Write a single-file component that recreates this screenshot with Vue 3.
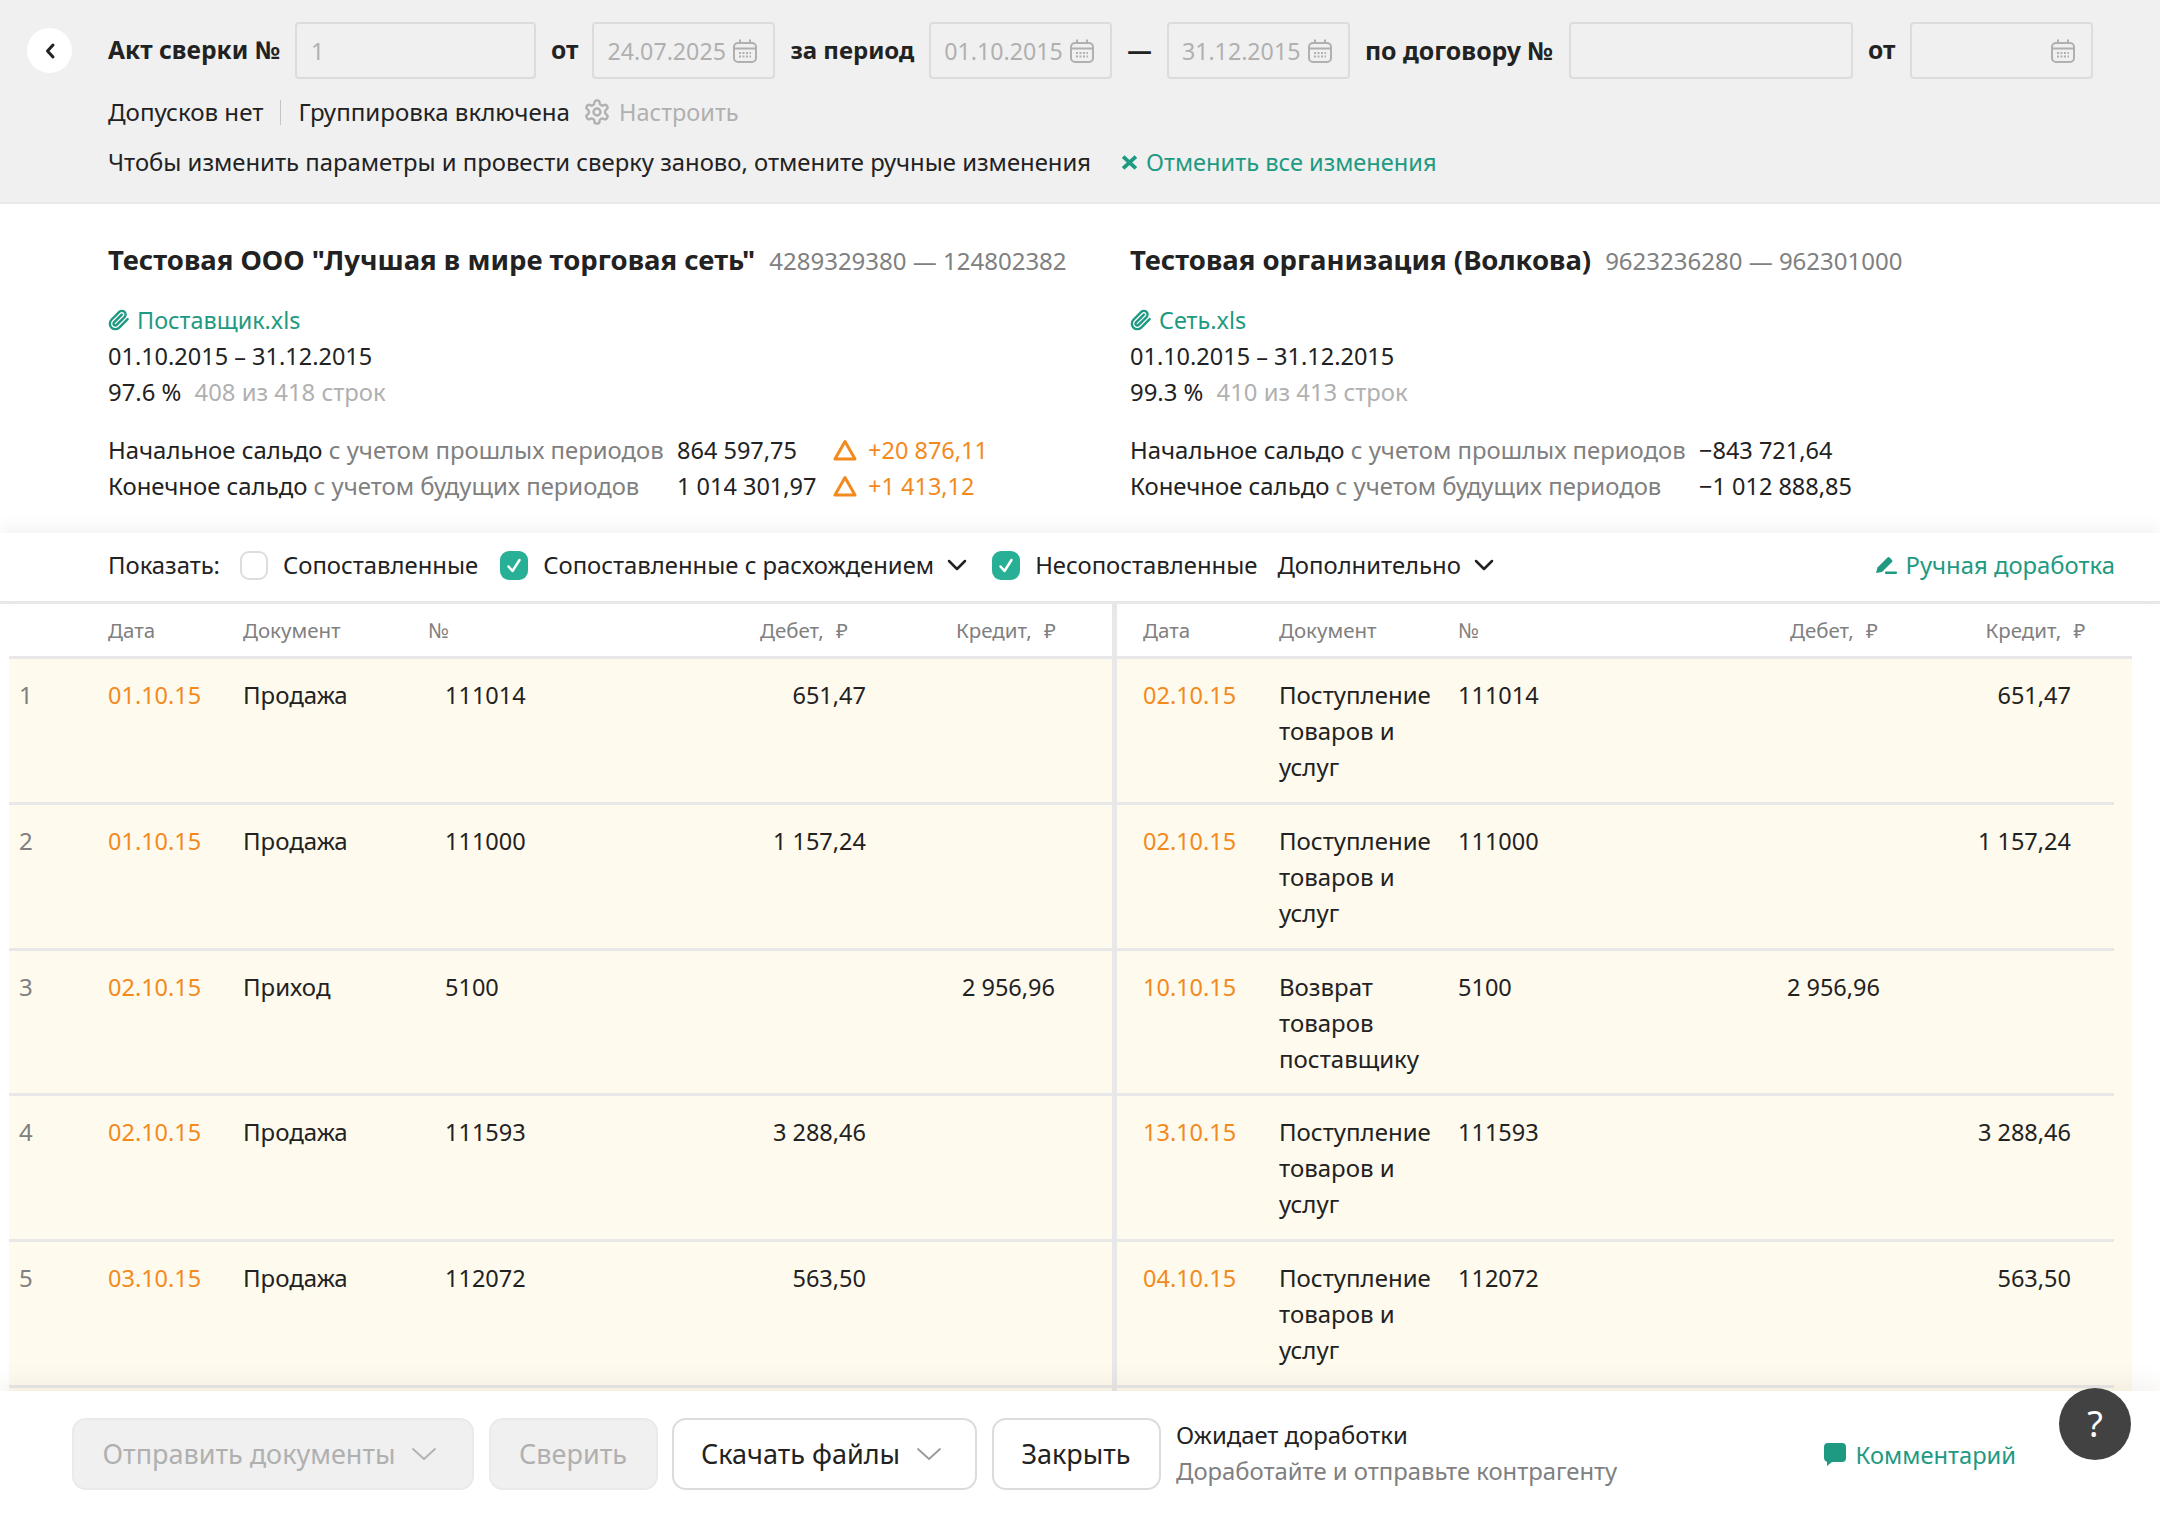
<template>
  <div class="page">
    <header class="top">
      <div class="top-row">
        <button class="back">
          <svg viewBox="0 0 12 18" fill="none" stroke="currentColor" stroke-width="3" stroke-linecap="round" stroke-linejoin="round">
            <path d="M9 3L3.500 9L9 15"/>
          </svg>
        </button>
        <b class="back-gap">Акт сверки №</b>
        <div class="field w-num"><span>1</span></div>
        <b class="tight">от</b>
        <div class="field w-date">
          <span>24.07.2025</span>
          <svg class="cal" viewBox="0 0 24 24" fill="none" stroke="currentColor" stroke-width="2">
            <rect x="1" y="4" width="22" height="19" rx="4"/><path d="M1 9.500h22M7 0.500v4M17 0.500v4"/>
            <path stroke-dasharray="2 1.500" d="M6 14h12M6 17.500h12"/>
          </svg>
        </div>
        <b class="period">за период</b>
        <div class="field w-date">
          <span>01.10.2015</span>
          <svg class="cal" viewBox="0 0 24 24" fill="none" stroke="currentColor" stroke-width="2">
            <rect x="1" y="4" width="22" height="19" rx="4"/><path d="M1 9.500h22M7 0.500v4M17 0.500v4"/>
            <path stroke-dasharray="2 1.500" d="M6 14h12M6 17.500h12"/>
          </svg>
        </div>
        <b>—</b>
        <div class="field w-date">
          <span>31.12.2015</span>
          <svg class="cal" viewBox="0 0 24 24" fill="none" stroke="currentColor" stroke-width="2">
            <rect x="1" y="4" width="22" height="19" rx="4"/><path d="M1 9.500h22M7 0.500v4M17 0.500v4"/>
            <path stroke-dasharray="2 1.500" d="M6 14h12M6 17.500h12"/>
          </svg>
        </div>
        <b class="contract">по договору №</b>
        <div class="field w-contract"></div>
        <b>от</b>
        <div class="field w-date">
          <span></span>
          <svg class="cal" viewBox="0 0 24 24" fill="none" stroke="currentColor" stroke-width="2">
            <rect x="1" y="4" width="22" height="19" rx="4"/><path d="M1 9.500h22M7 0.500v4M17 0.500v4"/>
            <path stroke-dasharray="2 1.500" d="M6 14h12M6 17.500h12"/>
          </svg>
        </div>
      </div>
      <div class="params">
        <span>Допусков нет</span>
        <i class="sep"></i>
        <span>Группировка включена</span>
        <svg class="gear" viewBox="0 0 24 24" fill="none" stroke="currentColor" stroke-width="2">
          <path d="M12.220 2h-.44a2 2 0 0 0-2 2v.18a2 2 0 0 1-1 1.730l-.43.25a2 2 0 0 1-2 0l-.15-.08a2 2 0 0 0-2.730.73l-.22.38a2 2 0 0 0 .73 2.730l.15.1a2 2 0 0 1 1 1.720v.51a2 2 0 0 1-1 1.740l-.15.09a2 2 0 0 0-.73 2.730l.22.38a2 2 0 0 0 2.730.73l.15-.08a2 2 0 0 1 2 0l.43.25a2 2 0 0 1 1 1.730V20a2 2 0 0 0 2 2h.44a2 2 0 0 0 2-2v-.18a2 2 0 0 1 1-1.730l.43-.25a2 2 0 0 1 2 0l.15.08a2 2 0 0 0 2.730-.73l.22-.39a2 2 0 0 0-.73-2.730l-.15-.08a2 2 0 0 1-1-1.740v-.5a2 2 0 0 1 1-1.740l.15-.09a2 2 0 0 0 .73-2.730l-.22-.38a2 2 0 0 0-2.730-.73l-.15.08a2 2 0 0 1-2 0l-.43-.25a2 2 0 0 1-1-1.730V4a2 2 0 0 0-2-2z"/>
          <circle cx="12" cy="12" r="3"/>
        </svg>
        <span class="muted setup">Настроить</span>
      </div>
      <div class="notice">
        <span>Чтобы изменить параметры и провести сверку заново, отмените ручные изменения</span>
        <a class="link cancel">
          <svg viewBox="0 0 16 16" fill="none" stroke="currentColor" stroke-width="3.600">
            <path d="M2 2.500l12 11M14 2.500l-12 11"/>
          </svg>
          Отменить все изменения
        </a>
      </div>
    </header>

    <section class="parties">
      <div v-for="p in parties" :key="p.inn" class="party">
        <div class="party-title"><b>{{ p.name }}</b><span>{{ p.inn }}</span></div>
        <a class="link file">
          <svg viewBox="0 0 24 24" fill="none" stroke="currentColor" stroke-width="2.600" stroke-linecap="round" stroke-linejoin="round">
            <path d="M21.440 11.050l-9.190 9.190a6 6 0 0 1-8.490-8.490l8.570-8.570A4 4 0 1 1 18 8.840l-8.590 8.570a2 2 0 0 1-2.830-2.830l8.490-8.480"/>
          </svg>
          {{ p.file }}
        </a>
        <div class="digits">01.10.2015 – 31.12.2015</div>
        <div>{{ p.percent }} <span class="muted percent-note">{{ p.lines }}</span></div>
        <div class="balances">
          <div v-for="b in p.balances" :key="b.label" class="balance">
            <span class="balance-label">{{ b.label }} <span class="gray">{{ b.note }}</span></span>
            <span class="balance-value digits">{{ b.value }}</span>
            <span v-if="b.delta" class="delta digits">
              <svg viewBox="0 0 24 22" fill="none" stroke="currentColor" stroke-width="3" stroke-linejoin="round">
                <path d="M12 2.500L2 20h20z"/>
              </svg>
              {{ b.delta }}
            </span>
          </div>
        </div>
      </div>
    </section>

    <section class="filters">
      <span class="show-label">Показать:</span>
      <label class="check"><i class="box"></i>Сопоставленные</label>
      <label class="check check-diff">
        <i class="box on">
          <svg viewBox="0 0 28 28" fill="none" stroke="#fff" stroke-width="2.500" stroke-linecap="round" stroke-linejoin="round"><path d="M8.500 15l4 4.500l7-11"/></svg>
        </i>
        Сопоставленные с расхождением
        <svg class="chev" viewBox="0 0 20 12" fill="none" stroke="currentColor" stroke-width="2.500" stroke-linecap="round" stroke-linejoin="round"><path d="M2 2l8 8l8-8"/></svg>
      </label>
      <label class="check check-last">
        <i class="box on">
          <svg viewBox="0 0 28 28" fill="none" stroke="#fff" stroke-width="2.500" stroke-linecap="round" stroke-linejoin="round"><path d="M8.500 15l4 4.500l7-11"/></svg>
        </i>
        Несопоставленные
      </label>
      <span class="extra">
        Дополнительно
        <svg class="chev" viewBox="0 0 20 12" fill="none" stroke="currentColor" stroke-width="2.500" stroke-linecap="round" stroke-linejoin="round"><path d="M2 2l8 8l8-8"/></svg>
      </span>
      <a class="link manual">
        <svg viewBox="0 0 21 18" fill="currentColor">
          <path d="M0 17l1.500-5.500L11.500 1.500a1.500 1.500 0 0 1 2.100 0l2.400 2.400a1.500 1.500 0 0 1 0 2.100L6 16z"/>
          <rect x="9" y="15.500" width="12" height="2.500" rx="1"/>
        </svg>
        Ручная доработка
      </a>
    </section>

    <section class="tables">
      <div class="pane pane-left">
        <div class="thead">
          <span>Дата</span><span>Документ</span><span>№</span>
          <span class="num">Дебет, <i class="rub">₽</i></span>
          <span class="num">Кредит, <i class="rub">₽</i></span>
        </div>
        <div class="tbody">
          <div v-for="r in rows" :key="r.n" class="row">
            <span class="gray">{{ r.n }}</span>
            <span class="date digits">{{ r.left.date }}</span>
            <span>{{ r.left.doc }}</span>
            <span class="no digits">{{ r.no }}</span>
            <span class="num digits">{{ r.left.debit }}</span>
            <span class="num digits">{{ r.left.credit }}</span>
          </div>
        </div>
      </div>
      <div class="pane pane-right">
        <div class="thead">
          <span>Дата</span><span>Документ</span><span>№</span>
          <span class="num">Дебет, <i class="rub">₽</i></span>
          <span class="num">Кредит, <i class="rub">₽</i></span>
        </div>
        <div class="tbody">
          <div v-for="r in rows" :key="r.n" class="row">
            <span class="date digits">{{ r.right.date }}</span>
            <span>{{ r.right.doc }}</span>
            <span class="digits">{{ r.no }}</span>
            <span class="num digits">{{ r.right.debit }}</span>
            <span class="num digits">{{ r.right.credit }}</span>
          </div>
        </div>
      </div>
    </section>

    <footer class="bottom">
      <button class="btn disabled btn-send">
        Отправить документы
        <svg viewBox="0 0 26 14" fill="none" stroke="currentColor" stroke-width="1.800" stroke-linecap="round" stroke-linejoin="round"><path d="M2 2l11 10L24 2"/></svg>
      </button>
      <button class="btn disabled btn-check">Сверить</button>
      <button class="btn btn-files">
        Скачать файлы
        <svg viewBox="0 0 26 14" fill="none" stroke="#999" stroke-width="1.800" stroke-linecap="round" stroke-linejoin="round"><path d="M2 2l11 10L24 2"/></svg>
      </button>
      <button class="btn btn-close">Закрыть</button>
      <div class="status">
        <div>Ожидает доработки</div>
        <div class="gray">Доработайте и отправьте контрагенту</div>
      </div>
      <a class="link comment">
        <svg viewBox="0 0 22 24" fill="currentColor">
          <path d="M4 0h14a4 4 0 0 1 4 4v11a4 4 0 0 1-4 4H8l-5 4v-4.300A4 4 0 0 1 0 15V4a4 4 0 0 1 4-4z"/>
        </svg>
        Комментарий
      </a>
    </footer>

    <div class="help">?</div>
  </div>
</template>

<script setup>
const parties = [
  {
    name: 'Тестовая ООО "Лучшая в мире торговая сеть"',
    inn: '4289329380 — 124802382',
    file: 'Поставщик.xls',
    percent: '97.6 %',
    lines: '408 из 418 строк',
    balances: [
      { label: 'Начальное сальдо', note: 'с учетом прошлых периодов', value: '864 597,75', delta: '+20 876,11' },
      { label: 'Конечное сальдо', note: 'с учетом будущих периодов', value: '1 014 301,97', delta: '+1 413,12' }
    ]
  },
  {
    name: 'Тестовая организация (Волкова)',
    inn: '9623236280 — 962301000',
    file: 'Сеть.xls',
    percent: '99.3 %',
    lines: '410 из 413 строк',
    balances: [
      { label: 'Начальное сальдо', note: 'с учетом прошлых периодов', value: '−843 721,64' },
      { label: 'Конечное сальдо', note: 'с учетом будущих периодов', value: '−1 012 888,85' }
    ]
  }
]

const incoming = 'Поступление товаров и услуг'

const rows = [
  {
    n: 1, no: '111014',
    left: { date: '01.10.15', doc: 'Продажа', debit: '651,47' },
    right: { date: '02.10.15', doc: incoming, credit: '651,47' }
  },
  {
    n: 2, no: '111000',
    left: { date: '01.10.15', doc: 'Продажа', debit: '1 157,24' },
    right: { date: '02.10.15', doc: incoming, credit: '1 157,24' }
  },
  {
    n: 3, no: '5100',
    left: { date: '02.10.15', doc: 'Приход', credit: '2 956,96' },
    right: { date: '10.10.15', doc: 'Возврат товаров поставщику', debit: '2 956,96' }
  },
  {
    n: 4, no: '111593',
    left: { date: '02.10.15', doc: 'Продажа', debit: '3 288,46' },
    right: { date: '13.10.15', doc: incoming, credit: '3 288,46' }
  },
  {
    n: 5, no: '112072',
    left: { date: '03.10.15', doc: 'Продажа', debit: '563,50' },
    right: { date: '04.10.15', doc: incoming, credit: '563,50' }
  }
]
</script>

<style>
html, body {
  margin: 0;
  background: #fff;
  overflow: hidden;
}
</style>

<style scoped>
.page {
  position: relative;
  display: flex;
  flex-direction: column;
  height: 1516px;
  overflow: hidden;
  font-family: "Noto Sans", "Open Sans", sans-serif;
  font-size: 23.850px;
  line-height: 36px;
  color: #222;
}

.link {
  color: #1f9a82;
  display: inline-flex;
  align-items: center;
}

.muted {
  color: #b0b0b0;
}

.gray {
  color: #808080;
}

.digits {
  font-size: 23.500px;
}

.top {
  flex-shrink: 0;
  box-sizing: border-box;
  height: 204px;
  padding: 22px 0 0 27px;
  background: #f0f0f0;
  border-bottom: 2px solid #e8e8e8;
}

.top-row {
  display: flex;
  align-items: center;
  gap: 15px;
  height: 57px;
}

.top-row b {
  font-size: 24.600px;
  font-weight: 700;
  position: relative;
  top: -1px;
}

.top-row .tight {
  margin-right: -1px;
}

.top-row .period {
  font-size: 24px;
}

.top-row .contract {
  margin-right: 1px;
  font-size: 24.900px;
}

.back {
  width: 45px;
  height: 45px;
  padding: 0;
  border: none;
  border-radius: 50%;
  background: #fff;
  color: #222;
  display: flex;
  align-items: center;
  justify-content: center;
}

.back svg {
  width: 12px;
  height: 18px;
}

.back-gap {
  margin-left: 21px;
}

.field {
  box-sizing: border-box;
  height: 57px;
  flex-shrink: 0;
  padding: 0 16px 0 13px;
  display: flex;
  align-items: center;
  justify-content: space-between;
  border: 2px solid #dcdcdc;
  border-radius: 4px;
  font-size: 23.200px;
  color: #b0b0b0;
}

.w-num {
  width: 241px;
  padding-left: 14px;
}

.w-date {
  width: 183px;
}

.w-contract {
  width: 284px;
}

.cal {
  width: 24px;
  height: 24px;
  flex-shrink: 0;
}

.params {
  display: flex;
  align-items: center;
  margin: 15px 0 0 81px;
  font-size: 24.100px;
}

.sep {
  width: 1px;
  height: 25px;
  margin: 0 17px 0 17px;
  background: #c4c4c4;
}

.gear {
  width: 28px;
  height: 28px;
  margin: 0 8px 0 13px;
  color: #b0b0b0;
}

.setup {
  font-size: 23.500px;
}

.notice {
  display: flex;
  align-items: center;
  margin: 14px 0 0 81px;
}

.cancel {
  margin-left: 30px;
  font-size: 23.600px;
}

.cancel svg {
  width: 17px;
  height: 17px;
  margin-right: 8px;
}

.parties {
  flex-shrink: 0;
  box-sizing: border-box;
  height: 329px;
  display: flex;
  padding: 38px 0 0 108px;
}

.party {
  width: 1022px;
}

.party-title {
  display: flex;
  align-items: baseline;
  gap: 14px;
  margin-bottom: 23px;
  font-size: 24px;
  color: #808080;
}

.party-title b {
  font-size: 27.500px;
  color: #222;
}

.file {
  display: flex;
  font-size: 23.400px;
}

.file svg {
  width: 22px;
  height: 22px;
  margin-right: 7px;
}

.percent-note {
  margin-left: 7px;
}

.balances {
  margin-top: 22px;
}

.balance {
  display: flex;
  align-items: center;
  font-size: 23.900px;
}

.balance-label {
  width: 569px;
  flex-shrink: 0;
}

.balance-value {
  width: 156px;
  flex-shrink: 0;
  white-space: nowrap;
}

.delta {
  display: flex;
  align-items: center;
  color: #f28a1e;
  white-space: nowrap;
}

.delta svg {
  width: 24px;
  height: 22px;
  margin-right: 11px;
}

.filters {
  position: relative;
  flex-shrink: 0;
  box-sizing: border-box;
  height: 71px;
  display: flex;
  align-items: center;
  padding: 0 45px 4px 108px;
  background: #fff;
  border-bottom: 3px solid #e8e8e8;
  box-shadow: 0 -6px 16px rgba(0, 0, 0, 0.05);
}

.show-label {
  margin-right: 20px;
}

.check {
  display: flex;
  align-items: center;
  margin-right: 22px;
}

.check-diff {
  margin-right: 25px;
}

.check-last {
  margin-right: 20px;
}

.box {
  box-sizing: border-box;
  width: 28px;
  height: 29px;
  margin-right: 15px;
  flex-shrink: 0;
  border: 2px solid #ddd;
  border-radius: 9px;
  background: #fff;
}

.box.on {
  border: none;
  background: #27b096;
}

.box svg {
  display: block;
  width: 28px;
  height: 29px;
}

.chev {
  width: 20px;
  height: 12px;
  margin-left: 13px;
}

.extra {
  display: flex;
  align-items: center;
}

.manual {
  margin-left: auto;
}

.manual svg {
  width: 21px;
  height: 18px;
  margin-right: 8px;
}

.tables {
  flex: 1;
  min-height: 0;
  display: flex;
  overflow: hidden;
}

.pane-left {
  width: 1103px;
  flex-shrink: 0;
  padding-left: 9px;
  border-right: 5px solid #e8e8e8;
}

.pane-right {
  width: 1015px;
  flex-shrink: 0;
}

.thead {
  box-sizing: border-box;
  height: 55px;
  display: grid;
  align-items: center;
  border-bottom: 3px solid #e8e8e8;
  font-size: 20.500px;
  color: #808080;
}

.rub {
  margin-left: 7px;
  font-style: normal;
}

.tbody {
  height: 800px;
  background: #fefaee;
}

.row {
  box-sizing: border-box;
  height: 145.800px;
  display: grid;
  align-items: start;
  padding-top: 18px;
  border-bottom: 3px solid #e8e8e8;
  font-size: 24px;
}

.row .digits {
  font-size: 23.500px;
}

.num {
  text-align: right;
  white-space: nowrap;
}

.date {
  color: #f28a1e;
}

.pane-left .thead {
  padding-left: 99px;
  grid-template-columns: 135px 185px 200px 220px 208px;
}

.pane-left .row {
  padding-left: 10px;
  grid-template-columns: 89px 135px 185px 200px 238px 189px;
}

.no {
  padding-left: 17px;
}

.pane-right .thead {
  padding-left: 26px;
  grid-template-columns: 136px 179px 200px 220px 207.500px;
}

.pane-right .row {
  width: 997px;
  padding-left: 26px;
  grid-template-columns: 136px 179px 200px 222px 191px;
}

.bottom {
  position: absolute;
  left: 0;
  right: 0;
  bottom: 0;
  box-sizing: border-box;
  height: 125px;
  display: flex;
  align-items: center;
  gap: 14.500px;
  padding: 0 144px 0 72px;
  background: #fff;
  box-shadow: 0 -6px 24px rgba(90, 70, 20, 0.08);
}

.btn {
  box-sizing: border-box;
  height: 72px;
  padding: 0 6px 0 0;
  display: flex;
  align-items: center;
  justify-content: center;
  gap: 16px;
  flex-shrink: 0;
  border: 2px solid #dcdcdc;
  border-radius: 14px;
  background: #fff;
  font-family: inherit;
  font-size: 27px;
  color: #222;
}

.btn svg {
  width: 26px;
  height: 14px;
}

.btn.disabled {
  background: #f0f0f0;
  border-color: #eaeaea;
  color: #b0b0b0;
}

.btn-send {
  width: 402px;
}

.btn-check {
  width: 169px;
  padding: 0;
}

.btn-files {
  width: 305px;
}

.btn-close {
  width: 169px;
  padding: 0;
}

.status {
  flex-shrink: 0;
  margin-left: 1px;
  padding-bottom: 2px;
}

.comment {
  margin-left: auto;
  padding-top: 2px;
  font-size: 23.700px;
}

.comment svg {
  width: 22px;
  height: 24px;
  margin-right: 10px;
}

.help {
  position: absolute;
  left: 2059px;
  top: 1388px;
  width: 72px;
  height: 72px;
  border-radius: 50%;
  background: #424242;
  color: #fff;
  font-size: 36px;
  line-height: 72px;
  text-align: center;
}
</style>
